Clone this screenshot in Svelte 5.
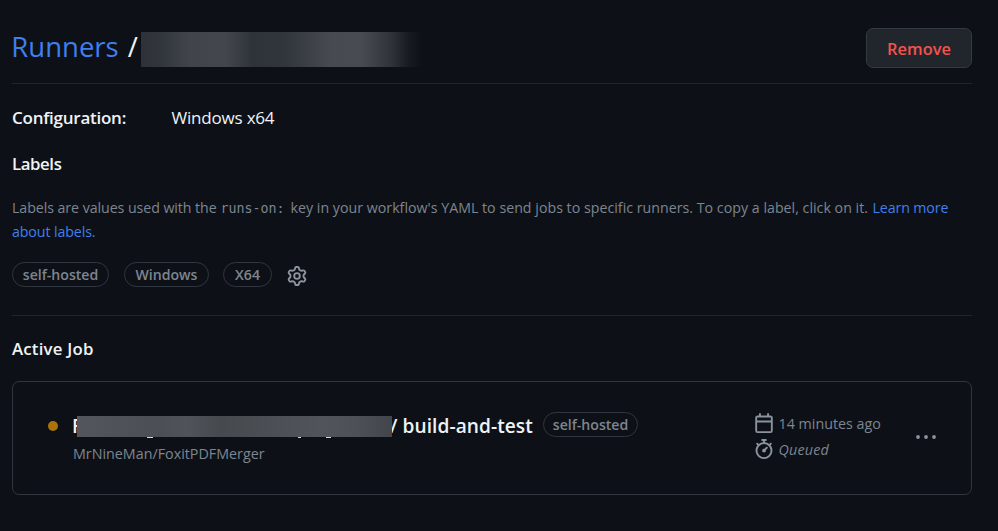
<script>
  const labels = [
    { name: 'self-hosted', width: 97 },
    { name: 'Windows', width: 85 },
    { name: 'X64', width: 49 }
  ];
</script>

<main>
  <header>
    <h1><a href="#runners">Runners</a><span class="slash">/</span></h1>
    <span class="name-mask"></span>
    <button class="remove">Remove</button>
  </header>

  <div class="config">
    <strong>Configuration:</strong>
    <span>Windows x64</span>
  </div>

  <h2 class="labels-title">Labels</h2>
  <p>
    <span class="l1">Labels are values used with the</span><code>runs-on:</code><span class="l2">key in your workflow's YAML to send jobs to specific runners. To copy a label, click on it.</span><a href="#learn">Learn more<br />about labels.</a>
  </p>

  <div class="labels">
    {#each labels as label}
      <span class="pill" style:width="{label.width}px">{label.name}</span>
    {/each}
    <svg class="gear" width="20" height="20" viewBox="0 0 16 16"><path d="M8 0a8.2 8.2 0 0 1 .701.031C9.444.095 9.99.645 10.16 1.29l.288 1.107c.018.066.079.158.212.224.231.114.454.243.668.386.123.082.233.09.299.071l1.103-.303c.644-.176 1.392.021 1.82.63.27.385.506.792.704 1.218.315.675.111 1.422-.364 1.891l-.814.806c-.049.048-.098.147-.088.294.016.257.016.515 0 .772-.01.147.038.246.088.294l.814.806c.475.469.679 1.216.364 1.891a7.977 7.977 0 0 1-.704 1.217c-.428.61-1.176.807-1.82.63l-1.102-.302c-.067-.019-.177-.011-.3.071a5.909 5.909 0 0 1-.668.386c-.133.066-.194.158-.211.224l-.29 1.106c-.168.646-.715 1.196-1.458 1.26a8.006 8.006 0 0 1-1.402 0c-.743-.064-1.289-.614-1.458-1.26l-.289-1.106c-.018-.066-.079-.158-.212-.224a5.738 5.738 0 0 1-.668-.386c-.123-.082-.233-.09-.299-.071l-1.103.303c-.644.176-1.392-.021-1.82-.63a8.12 8.12 0 0 1-.704-1.218c-.315-.675-.111-1.422.363-1.891l.815-.806c.05-.048.098-.147.088-.294a6.214 6.214 0 0 1 0-.772c.01-.147-.038-.246-.088-.294l-.815-.806C.635 6.045.431 5.298.746 4.623a7.92 7.92 0 0 1 .704-1.217c.428-.61 1.176-.807 1.82-.63l1.102.302c.067.019.177.011.3-.071.214-.143.437-.272.668-.386.133-.066.194-.158.211-.224l.29-1.106C6.009.645 6.556.095 7.299.03 7.53.01 7.764 0 8 0Zm-.571 1.525c-.036.003-.108.036-.137.146l-.289 1.105c-.147.561-.549.967-.998 1.189-.173.086-.34.183-.5.29-.417.278-.97.423-1.529.27l-1.103-.303c-.109-.03-.175.016-.195.045-.22.312-.412.644-.573.99-.014.031-.021.11.059.19l.815.806c.411.406.562.957.53 1.456a4.709 4.709 0 0 0 0 .582c.032.499-.119 1.05-.53 1.456l-.815.806c-.081.08-.073.159-.059.19.162.346.353.677.573.989.02.03.085.076.195.046l1.102-.303c.56-.153 1.113-.008 1.53.27.161.107.328.204.501.29.447.222.85.629.997 1.189l.289 1.105c.029.109.101.143.137.146a6.6 6.6 0 0 0 1.142 0c.036-.003.108-.036.137-.146l.289-1.105c.147-.561.549-.967.998-1.189.173-.086.34-.183.5-.29.417-.278.97-.423 1.529-.27l1.103.303c.109.029.175-.016.195-.045.22-.313.411-.644.573-.99.014-.031.021-.11-.059-.19l-.815-.806c-.411-.406-.562-.957-.53-1.456a4.709 4.709 0 0 0 0-.582c-.032-.499.119-1.05.53-1.456l.815-.806c.081-.08.073-.159.059-.19a6.464 6.464 0 0 0-.573-.989c-.02-.03-.085-.076-.195-.046l-1.102.303c-.56.153-1.113.008-1.53-.27a4.44 4.44 0 0 0-.501-.29c-.447-.222-.85-.629-.997-1.189l-.289-1.105c-.029-.11-.101-.143-.137-.146a6.6 6.6 0 0 0-1.142 0ZM11 8a3 3 0 1 1-6 0 3 3 0 0 1 6 0ZM9.5 8a1.5 1.5 0 1 0-3.001.001A1.5 1.5 0 0 0 9.5 8Z" /></svg>
  </div>

  <h2 class="active-title">Active Job</h2>

  <section class="card">
    <span class="dot"></span>
    <div class="job">
      <div class="job-row">
        <span class="initial">F</span>
        <span class="job-mask">
          <i style:left="70px" style:width="6px"></i>
          <i style:left="221px" style:width="3px"></i>
          <i style:left="249px" style:width="5px"></i>
        </span>
        <span class="job-name">/ build-and-test</span>
        <span class="pill" style:width="95px">self-hosted</span>
      </div>
      <div class="repo">MrNineMan/FoxitPDFMerger</div>
    </div>
    <div class="meta">
      <div>
        <svg width="20" height="20" viewBox="0 0 16 16"><path d="M4.75 0a.75.75 0 0 1 .75.75V2h5V.75a.75.75 0 0 1 1.5 0V2h1.25c.966 0 1.75.784 1.75 1.75v10.5A1.75 1.75 0 0 1 13.25 16H2.75A1.75 1.75 0 0 1 1 14.25V3.75C1 2.784 1.784 2 2.75 2H4V.75A.75.75 0 0 1 4.75 0ZM2.5 7.5v6.75c0 .138.112.25.25.25h10.5a.25.25 0 0 0 .25-.25V7.5Zm10.75-4H2.75a.25.25 0 0 0-.25.25V6h11V3.75a.25.25 0 0 0-.25-.25Z" /></svg>
        <span class="time">14 minutes ago</span>
      </div>
      <div>
        <svg width="20" height="20" viewBox="0 0 16 16"><path d="M5.75.75A.75.75 0 0 1 6.5 0h3a.75.75 0 0 1 0 1.5h-.75v1l-.001.041a6.724 6.724 0 0 1 3.464 1.435l.007-.006.75-.75a.749.749 0 0 1 1.275.326.749.749 0 0 1-.215.734l-.75.75-.006.007a6.75 6.75 0 1 1-10.548 0L2.72 5.03l-.75-.75a.751.751 0 0 1 .018-1.042.751.751 0 0 1 1.042-.018l.75.75.007.006A6.72 6.72 0 0 1 7.25 2.541V1.5H6.5a.75.75 0 0 1-.75-.75ZM8 14.5a5.25 5.25 0 1 0-.001-10.501A5.25 5.25 0 0 0 8 14.5Zm.389-6.7 1.33-1.33a.75.75 0 1 1 1.061 1.06L9.45 8.861A1.503 1.503 0 0 1 8 10.75a1.499 1.499 0 1 1 .389-2.95Z" /></svg>
        <em>Queued</em>
      </div>
    </div>
    <svg class="kebab" width="20" height="20" viewBox="0 0 20 20"><circle cx="2" cy="10" r="1.9" /><circle cx="10" cy="10" r="1.9" /><circle cx="18" cy="10" r="1.9" /></svg>
  </section>
</main>

<style>
  :global(body) { background: #0d1117; }
  main {
    box-sizing: border-box;
    width: 998px;
    height: 531px;
    padding: 28px 26px 0 12px;
    background: #0d1117;
    color: #f0f3f6;
    font-family: 'Open Sans', 'Noto Sans', sans-serif;
    overflow: hidden;
  }
  a { color: #3f7fee; text-decoration: none; }
  h1, h2, p { margin: 0; }
  header {
    display: flex;
    height: 55px;
    border-bottom: 1px solid #21262d;
  }
  h1 { width: 129px; font-size: 27.5px; font-weight: 400; line-height: 38px; white-space: nowrap; text-indent: -0.7px; }
  .slash { margin-left: 9px; }
  .name-mask {
    width: 282px;
    height: 35px;
    margin-top: 4px;
    background: linear-gradient(90deg, #2e3138 0, #31353c 20px, #41444b 48px, #43464d 85px, #2e3239 112px, #31353c 145px, #474a51 190px, #484b52 220px, #30333a 250px, #171a21 268px, #0d1117 282px);
  }
  .remove {
    box-sizing: border-box;
    width: 106px;
    height: 40px;
    margin-left: auto;
    padding: 1px 0 0;
    border: 1px solid #343a41;
    border-radius: 7px;
    background: #21262d;
    color: #f4524d;
    font: 600 16.4px/37px 'Open Sans', sans-serif;
  }
  .config { display: flex; height: 24px; margin-top: 22px; font-size: 17px; line-height: 24px; letter-spacing: -0.2px; }
  .config strong { width: 159.5px; font-weight: 600; letter-spacing: -0.25px; }
  h2 { font-size: 16.8px; font-weight: 600; line-height: 24px; letter-spacing: -0.4px; }
  .labels-title { margin-top: 22px; }
  p { height: 48px; margin-top: 20px; color: #7d8590; font-size: 14.2px; line-height: 24px; white-space: nowrap; }
  p a { letter-spacing: -0.1px; }
  .l1 { display: inline-block; width: 208.5px; letter-spacing: -0.06px; }
  .l2 { display: inline-block; width: 582px; letter-spacing: 0.02px; }
  code { display: inline-block; width: 70px; font-family: 'DejaVu Sans Mono', monospace; font-size: 13.3px; line-height: 20px; }
  .labels { display: flex; height: 25px; margin-top: 18px; }
  .pill {
    box-sizing: border-box;
    flex: none;
    height: 25px;
    border: 1px solid #30363d;
    border-radius: 13px;
    color: #7d8590;
    font-size: 14.1px;
    font-weight: 600;
    line-height: 23px;
    text-align: center;
    white-space: nowrap;
  }
  .labels .pill { margin-right: 15px; }
  .labels .pill:nth-child(2) { margin-right: 14px; }
  svg { display: block; flex: none; fill: #8b939d; }
  .gear { margin-top: 4px; }
  .active-title { margin-top: 28px; padding-top: 21px; border-top: 1px solid #21262d; letter-spacing: 0.22px; }
  .card {
    box-sizing: border-box;
    display: flex;
    height: 114px;
    margin-top: 20px;
    padding-left: 35px;
    border: 1px solid #30363d;
    border-radius: 7px;
  }
  .dot { width: 10px; height: 10px; margin: 39px 15px 0 0; border-radius: 50%; background: #a97508; }
  .job { width: 681px; padding-top: 30px; }
  .job-row { display: flex; height: 26px; font-size: 19.1px; font-weight: 600; line-height: 29px; white-space: nowrap; }
  .initial { width: 5px; margin-left: -1px; }
  .job-mask {
    position: relative;
    z-index: 1;
    flex: none;
    width: 315px;
    height: 21px;
    margin-top: 4px;
    background: linear-gradient(90deg, #53565d 0, #4b4e54 80px, #505359 110px, #46494d 143px, #4b4e54 190px, #51545b 245px, #4d5057 280px, #41454c 315px);
  }
  .job-mask i { position: absolute; top: 21px; height: 1px; background: #d5d8dc; }
  .job-name { width: 153px; margin-left: -2px; letter-spacing: 0.07px; }
  .repo { color: #7d8590; font-size: 14.3px; line-height: 26px; padding-top: 3px; }
  .meta { width: 162px; padding-top: 31px; color: #7d8590; font-size: 14.3px; line-height: 22px; }
  .meta div { display: flex; height: 26px; gap: 4.5px; white-space: nowrap; }
  .meta em { letter-spacing: 0.2px; }
  .kebab { margin-top: 45px; }
</style>
